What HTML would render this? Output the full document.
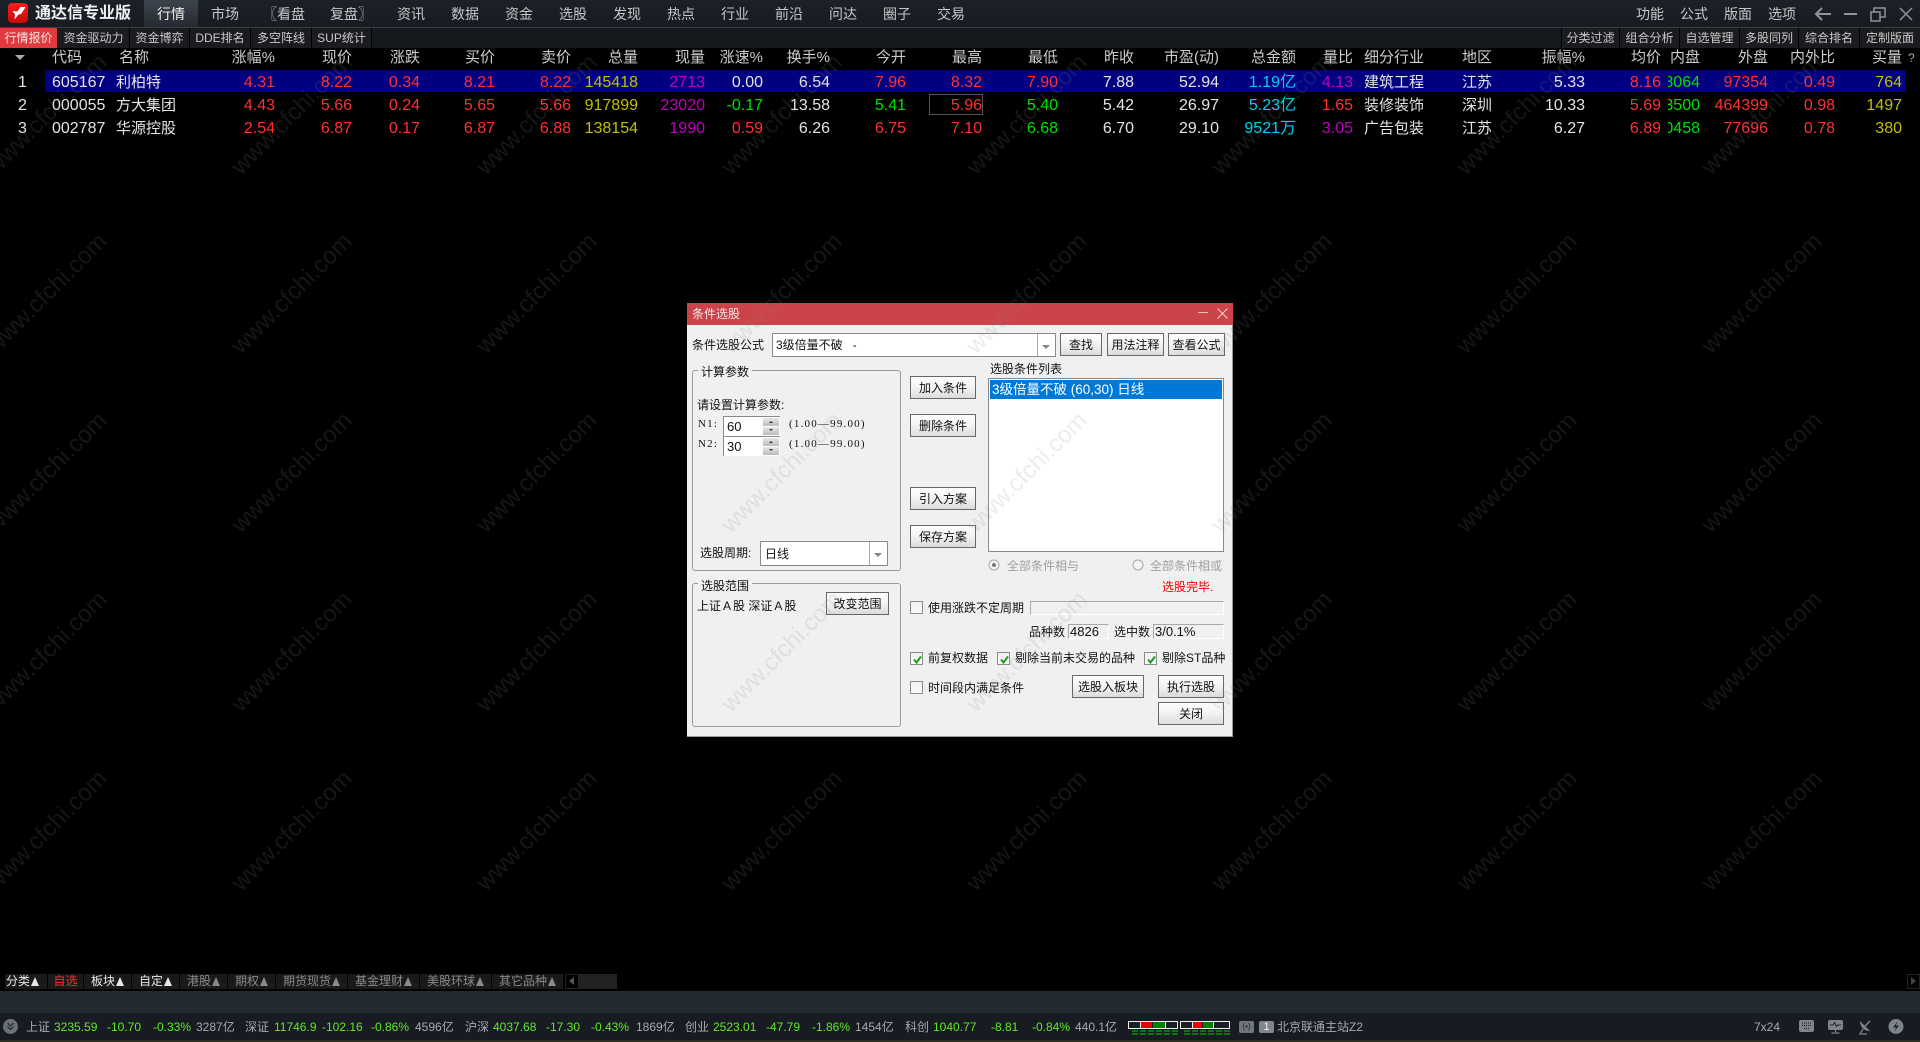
<!DOCTYPE html>
<html lang="zh">
<head>
<meta charset="utf-8">
<title>通达信专业版</title>
<style>
html,body{margin:0;padding:0;background:#000;}
body{position:relative;width:1920px;height:1042px;overflow:hidden;font-family:"Liberation Sans","Noto Sans CJK SC",sans-serif;color:#ddd;}
.a{position:absolute;}
.t{position:absolute;white-space:nowrap;line-height:16px;font-size:12px;}
#top{left:0;top:0;width:1920px;height:27px;background:linear-gradient(#1c2027,#181b22);}
#line{left:0;top:27px;width:1920px;height:1px;background:#3a3f46;}
#sub{left:0;top:28px;width:1920px;height:20px;background:#15181d;}
.m{position:absolute;top:5px;font-size:14px;line-height:18px;color:#c4c6c8;white-space:nowrap;}
.st{position:absolute;top:28px;height:20px;line-height:20px;font-size:12px;color:#c8c8c8;text-align:center;background:#1b1c1f;border-right:1px solid #000;box-sizing:border-box;white-space:nowrap;}
table{position:absolute;left:0;top:48px;border-collapse:collapse;table-layout:fixed;width:1920px;font-size:16px;}
td,th{padding:0;text-align:right;font-weight:normal;white-space:nowrap;overflow:hidden;height:23px;line-height:23px;color:#e4e4e4;}
th{font-size:15px;height:23px;line-height:20px;color:#ccc;vertical-align:top;}
.l{text-align:left;font-size:15px;}
.c{text-align:center;}
.r{color:#ff3030;}.g{color:#00e000;}.y{color:#c0c000;}.p{color:#c000c0;}.b{color:#00d0f0;}
.cl{display:flex;justify-content:flex-end;overflow:hidden;width:32px;margin-left:7px;}
#dlg{left:687px;top:303px;width:546px;height:434px;background:#f0f0f0;border-right:1px solid #999;border-bottom:1px solid #999;box-sizing:border-box;}
#tt{left:687px;top:303px;width:546px;height:22px;background:#cb444a;}
.btn{position:absolute;box-sizing:border-box;border:1px solid #686868;background:linear-gradient(#fdfdfd,#f4f4f4 45%,#dcdcdc);color:#111;font-size:12px;display:flex;align-items:center;justify-content:center;white-space:nowrap;}
.grp{position:absolute;box-sizing:border-box;border:1px solid #9a9a9a;border-radius:3px;}
.k{color:#111;}
.lab{background:#f0f0f0;padding:0 3px;}
.box{position:absolute;box-sizing:border-box;border:1px solid #8a8a8a;background:#fff;}
.ar{position:absolute;width:0;height:0;border-left:4px solid transparent;border-right:4px solid transparent;border-top:4px solid #888;}
.cb{position:absolute;box-sizing:border-box;width:13px;height:13px;border:1px solid #8c8c8c;background:linear-gradient(#f0f0f0,#fafafa);}
.cb svg{position:absolute;left:1px;top:1px;}
.ser{font-family:"Liberation Serif","Noto Serif CJK SC",serif;font-size:11px;letter-spacing:1.2px;}
.spn{position:absolute;width:16px;height:8px;background:linear-gradient(#e8e8e8,#bbb);box-sizing:border-box;}
.sunk{position:absolute;box-sizing:border-box;border:1px solid #fff;border-top-color:#a8a8a8;border-left-color:#a8a8a8;background:#f0f0f0;}
.bt{position:absolute;top:974px;height:15px;line-height:15px;font-size:12px;background:#1a1a1a;text-align:center;color:#8a8a8a;white-space:nowrap;}
.bt.w{color:#e8e8e8;}
.tr{display:inline-block;margin-left:1px;width:0;height:0;border-left:4px solid transparent;border-right:4px solid transparent;border-bottom:9px solid currentColor;vertical-align:-1px;}
.s{position:absolute;top:1019px;line-height:16px;font-size:12px;color:#a4abb2;white-space:nowrap;}
.n{color:#5ceb26;}
</style>
</head>
<body>
<!-- top menu -->
<div class="a" id="top"></div>
<div class="a" id="line"></div>
<div class="a" id="sub"></div>
<div class="a" style="left:144px;top:0;width:54px;height:27px;background:linear-gradient(#3c444d,#252a31);"></div>
<div class="a" style="left:8px;top:3px;width:20px;height:20px;border-radius:4px;background:linear-gradient(#f02020,#c80808);"></div>
<svg class="a" style="left:8px;top:3px" width="20" height="20" viewBox="0 0 20 20"><path d="M4.500 8 L9.500 8.500 L12.500 4 L17.500 4 L13.500 10.500 L10 12 L6.500 16.500 L7 11.500 Z" fill="#fff"/></svg>
<div class="t" style="left:35px;top:4px;font-size:16px;line-height:20px;font-weight:bold;color:#eef0f2;">通达信专业版</div>
<div class="m" style="left:157px;color:#eee;">行情</div>
<div class="m" style="left:211px;">市场</div>
<div class="m" style="left:263px;">〖看盘</div>
<div class="m" style="left:330px;">复盘〗</div>
<div class="m" style="left:397px;">资讯</div>
<div class="m" style="left:451px;">数据</div>
<div class="m" style="left:505px;">资金</div>
<div class="m" style="left:559px;">选股</div>
<div class="m" style="left:613px;">发现</div>
<div class="m" style="left:667px;">热点</div>
<div class="m" style="left:721px;">行业</div>
<div class="m" style="left:775px;">前沿</div>
<div class="m" style="left:829px;">问达</div>
<div class="m" style="left:883px;">圈子</div>
<div class="m" style="left:937px;">交易</div>
<div class="m" style="left:1636px;">功能</div>
<div class="m" style="left:1680px;">公式</div>
<div class="m" style="left:1724px;">版面</div>
<div class="m" style="left:1768px;">选项</div>
<svg class="a" style="left:1810px;top:4px" width="110" height="20" viewBox="0 0 110 20" fill="none" stroke="#8f959b" stroke-width="1.5">
<path d="M21 10 H6 M12 4 L6 10 L12 16" stroke-width="2"/>
<path d="M34 10 H47" stroke-width="2"/>
<rect x="61" y="8" width="9" height="9"/><path d="M64 8 V4 H75 V13 H70"/>
<path d="M90 4 L102 16 M102 4 L90 16"/>
</svg>
<!-- sub tabs -->
<div class="st" style="left:0;width:58px;background:#e03a3e;color:#f4e8e8;">行情报价</div>
<div class="st" style="left:58px;width:72px;">资金驱动力</div>
<div class="st" style="left:130px;width:60px;">资金博弈</div>
<div class="st" style="left:190px;width:61px;">DDE排名</div>
<div class="st" style="left:251px;width:61px;">多空阵线</div>
<div class="st" style="left:312px;width:60px;">SUP统计</div>
<div class="st" style="left:1561px;width:59px;border-left:1px solid #000;">分类过滤</div>
<div class="st" style="left:1620px;width:60px;">组合分析</div>
<div class="st" style="left:1680px;width:60px;">自选管理</div>
<div class="st" style="left:1740px;width:59px;">多股同列</div>
<div class="st" style="left:1799px;width:61px;">综合排名</div>
<div class="st" style="left:1860px;width:60px;border-right:0;">定制版面</div>
<!-- highlight row -->
<div class="a" style="left:45px;top:70px;width:1861px;height:22px;background:#000080;"></div>
<div class="a" style="left:929px;top:94px;width:54px;height:21px;box-sizing:border-box;border:1px solid #555;"></div>
<div class="a" style="left:15px;top:55px;width:0;height:0;border-left:5px solid transparent;border-right:5px solid transparent;border-top:5px solid #aaa;"></div>
<!-- table -->
<table>
<colgroup>
<col style="width:45px"><col style="width:71px"><col style="width:84px"><col style="width:75px"><col style="width:77px"><col style="width:68px"><col style="width:75px"><col style="width:76px"><col style="width:67px"><col style="width:67px"><col style="width:58px"><col style="width:67px"><col style="width:76px"><col style="width:76px"><col style="width:76px"><col style="width:76px"><col style="width:85px"><col style="width:77px"><col style="width:57px"><col style="width:109px"><col style="width:68px"><col style="width:55px"><col style="width:76px"><col style="width:39px"><col style="width:68px"><col style="width:67px"><col style="width:67px"><col style="width:18px">
</colgroup>
<tr>
<th class="c"></th><th class="l" style="padding-left:7px">代码</th><th class="l" style="padding-left:3px">名称<span style="margin-left:51px;font-size:8px">●</span></th><th>涨幅%</th><th>现价</th><th>涨跌</th><th>买价</th><th>卖价</th><th>总量</th><th>现量</th><th>涨速%</th><th>换手%</th><th>今开</th><th>最高</th><th>最低</th><th>昨收</th><th>市盈(动)</th><th>总金额</th><th>量比</th><th class="l" style="padding-left:11px">细分行业</th><th class="l">地区</th><th>振幅%</th><th>均价</th><th>内盘</th><th>外盘</th><th>内外比</th><th>买量</th><th style="font-size:12px;color:#aaa;text-align:left;padding-left:6px;">?</th>
</tr>
<tr>
<td class="c">1</td><td class="l" style="padding-left:7px;font-size:16px">605167</td><td class="l">利柏特</td><td class="r">4.31</td><td class="r">8.22</td><td class="r">0.34</td><td class="r">8.21</td><td class="r">8.22</td><td class="y">145418</td><td class="p">2713</td><td>0.00</td><td>6.54</td><td class="r">7.96</td><td class="r">8.32</td><td class="r">7.90</td><td>7.88</td><td>52.94</td><td class="b">1.19亿</td><td class="p">4.13</td><td class="l" style="padding-left:11px">建筑工程</td><td class="l">江苏</td><td>5.33</td><td class="r">8.16</td><td class="g"><div class="cl">48064</div></td><td class="r">97354</td><td class="r">0.49</td><td class="y">764</td><td></td>
</tr>
<tr>
<td class="c">2</td><td class="l" style="padding-left:7px;font-size:16px">000055</td><td class="l">方大集团</td><td class="r">4.43</td><td class="r">5.66</td><td class="r">0.24</td><td class="r">5.65</td><td class="r">5.66</td><td class="y">917899</td><td class="p">23020</td><td class="g">-0.17</td><td>13.58</td><td class="g">5.41</td><td class="r">5.96</td><td class="g">5.40</td><td>5.42</td><td>26.97</td><td class="b">5.23亿</td><td class="r">1.65</td><td class="l" style="padding-left:11px">装修装饰</td><td class="l">深圳</td><td>10.33</td><td class="r">5.69</td><td class="g"><div class="cl">453500</div></td><td class="r">464399</td><td class="r">0.98</td><td class="y">1497</td><td></td>
</tr>
<tr>
<td class="c">3</td><td class="l" style="padding-left:7px;font-size:16px">002787</td><td class="l">华源控股</td><td class="r">2.54</td><td class="r">6.87</td><td class="r">0.17</td><td class="r">6.87</td><td class="r">6.88</td><td class="y">138154</td><td class="p">1990</td><td class="r">0.59</td><td>6.26</td><td class="r">6.75</td><td class="r">7.10</td><td class="g">6.68</td><td>6.70</td><td>29.10</td><td class="b">9521万</td><td class="p">3.05</td><td class="l" style="padding-left:11px">广告包装</td><td class="l">江苏</td><td>6.27</td><td class="r">6.89</td><td class="g"><div class="cl">60458</div></td><td class="r">77696</td><td class="r">0.78</td><td class="y">380</td><td></td>
</tr>
</table>

<!-- dialog -->
<div class="a" id="dlg"></div>
<div class="a" id="tt"></div>
<div class="t" style="left:692px;top:306px;color:#f6e6e6;">条件选股</div>
<div class="a" style="left:1198px;top:312px;width:10px;height:1px;background:#eeb;opacity:.8"></div>
<svg class="a" style="left:1217px;top:308px" width="11" height="11" fill="none" stroke="#f0d0d0"><path d="M.5 .5 L10.500 10.500 M10.500 .5 L.5 10.500"/></svg>

<div class="t k" style="left:692px;top:337px;">条件选股公式</div>
<div class="box" style="left:772px;top:333px;width:284px;height:24px;"></div>
<div class="a" style="left:1037px;top:334px;width:1px;height:22px;background:#aaa;"></div>
<div class="ar" style="left:1042px;top:345px;"></div>
<div class="t k" style="left:776px;top:337px;">3级倍量不破 &nbsp;&nbsp;-</div>
<div class="btn" style="left:1060px;top:333px;width:42px;height:23px;">查找</div>
<div class="btn" style="left:1107px;top:333px;width:57px;height:23px;">用法注释</div>
<div class="btn" style="left:1168px;top:333px;width:57px;height:23px;">查看公式</div>

<div class="grp" style="left:692px;top:370px;width:209px;height:201px;"></div>
<div class="t k lab" style="left:698px;top:364px;">计算参数</div>
<div class="t k" style="left:697px;top:397px;">请设置计算参数:</div>
<div class="t k ser" style="left:698px;top:416px;">N1:</div>
<div class="t k ser" style="left:698px;top:436px;">N2:</div>
<div class="a" style="left:723px;top:416px;width:57px;height:20px;background:#fff;border-top:1px solid #8a8a8a;border-left:1px solid #8a8a8a;box-sizing:border-box;"></div>
<div class="a" style="left:723px;top:436px;width:57px;height:20px;background:#fff;border-top:1px solid #8a8a8a;border-left:1px solid #8a8a8a;box-sizing:border-box;"></div>
<div class="spn" style="left:763px;top:418px;"></div><div class="spn" style="left:763px;top:427px;"></div>
<div class="spn" style="left:763px;top:438px;"></div><div class="spn" style="left:763px;top:447px;"></div>
<svg class="a" style="left:763px;top:418px" width="16" height="38" fill="#333"><path d="M6 5 h4 l-2 -2z M6 11 h4 l-2 2z M6 25 h4 l-2 -2z M6 31 h4 l-2 2z"/></svg>
<div class="t k" style="left:727px;top:419px;font-size:13px;">60</div>
<div class="t k" style="left:727px;top:439px;font-size:13px;">30</div>
<div class="t k ser" style="left:789px;top:416px;">(1.00—99.00)</div>
<div class="t k ser" style="left:789px;top:436px;">(1.00—99.00)</div>
<div class="t k" style="left:700px;top:545px;">选股周期:</div>
<div class="box" style="left:760px;top:541px;width:128px;height:25px;"></div>
<div class="a" style="left:869px;top:542px;width:1px;height:23px;background:#aaa;"></div>
<div class="ar" style="left:874px;top:553px;"></div>
<div class="t k" style="left:765px;top:546px;">日线</div>

<div class="grp" style="left:692px;top:583px;width:209px;height:144px;"></div>
<div class="t k lab" style="left:698px;top:578px;">选股范围</div>
<div class="t k" style="left:697px;top:598px;">上证<span style="margin:0 2px">A</span>股 深证<span style="margin:0 2px">A</span>股</div>
<div class="btn" style="left:826px;top:592px;width:63px;height:23px;">改变范围</div>

<div class="btn" style="left:910px;top:376px;width:66px;height:23px;">加入条件</div>
<div class="btn" style="left:910px;top:414px;width:66px;height:23px;">删除条件</div>
<div class="btn" style="left:910px;top:487px;width:66px;height:23px;">引入方案</div>
<div class="btn" style="left:910px;top:525px;width:66px;height:23px;">保存方案</div>

<div class="t k" style="left:990px;top:361px;">选股条件列表</div>
<div class="box" style="left:988px;top:378px;width:236px;height:174px;"></div>
<div class="a" style="left:990px;top:380px;width:232px;height:19px;background:#0078d7;"></div>
<div class="t" style="left:992px;top:382px;font-size:13.5px;color:#fff;">3级倍量不破 (60,30) 日线</div>

<svg class="a" style="left:988px;top:559px" width="12" height="12"><circle cx="6" cy="6" r="5" fill="#f4f4f4" stroke="#a8a8a8"/><circle cx="6" cy="6" r="2" fill="#777"/></svg>
<div class="t" style="left:1007px;top:558px;color:#a0a0a0;">全部条件相与</div>
<svg class="a" style="left:1132px;top:559px" width="12" height="12"><circle cx="6" cy="6" r="5" fill="#f4f4f4" stroke="#a8a8a8"/></svg>
<div class="t" style="left:1150px;top:558px;color:#a0a0a0;">全部条件相或</div>
<div class="t" style="left:1162px;top:579px;color:#f00000;">选股完毕.</div>

<div class="cb" style="left:910px;top:601px;"></div>
<div class="t k" style="left:928px;top:600px;">使用涨跌不定周期</div>
<div class="sunk" style="left:1030px;top:601px;width:194px;height:14px;"></div>
<div class="t k" style="left:1029px;top:624px;">品种数</div>
<div class="sunk" style="left:1068px;top:624px;width:41px;height:15px;"></div>
<div class="t k" style="left:1070px;top:624px;font-size:13px;">4826</div>
<div class="t k" style="left:1114px;top:624px;">选中数</div>
<div class="sunk" style="left:1153px;top:624px;width:71px;height:15px;"></div>
<div class="t k" style="left:1155px;top:624px;font-size:13px;">3/0.1%</div>

<div class="cb" style="left:910px;top:652px;"><svg width="11" height="11" fill="none" stroke="#1aa01a" stroke-width="2"><path d="M2 5.500 L4.500 8.500 L9 2.500"/></svg></div>
<div class="t k" style="left:928px;top:650px;">前复权数据</div>
<div class="cb" style="left:997px;top:652px;"><svg width="11" height="11" fill="none" stroke="#1aa01a" stroke-width="2"><path d="M2 5.500 L4.500 8.500 L9 2.500"/></svg></div>
<div class="t k" style="left:1015px;top:650px;">剔除当前未交易的品种</div>
<div class="cb" style="left:1144px;top:652px;"><svg width="11" height="11" fill="none" stroke="#1aa01a" stroke-width="2"><path d="M2 5.500 L4.500 8.500 L9 2.500"/></svg></div>
<div class="t k" style="left:1162px;top:650px;">剔除ST品种</div>
<div class="cb" style="left:910px;top:681px;"></div>
<div class="t k" style="left:928px;top:680px;">时间段内满足条件</div>
<div class="btn" style="left:1072px;top:675px;width:72px;height:23px;">选股入板块</div>
<div class="btn" style="left:1158px;top:675px;width:66px;height:23px;">执行选股</div>
<div class="btn" style="left:1158px;top:702px;width:66px;height:23px;">关闭</div>

<!-- bottom tabs -->
<div class="bt w" style="left:5px;width:41px;padding-left:1px;text-align:left;">分类<i class="tr"></i></div>
<div class="bt" style="left:48px;width:35px;color:#f03030;">自选</div>
<div class="bt w" style="left:84px;width:47px;">板块<i class="tr"></i></div>
<div class="bt w" style="left:132px;width:47px;">自定<i class="tr"></i></div>
<div class="bt" style="left:180px;width:47px;">港股<i class="tr"></i></div>
<div class="bt" style="left:228px;width:47px;">期权<i class="tr"></i></div>
<div class="bt" style="left:276px;width:71px;">期货现货<i class="tr"></i></div>
<div class="bt" style="left:348px;width:71px;">基金理财<i class="tr"></i></div>
<div class="bt" style="left:420px;width:71px;">美股环球<i class="tr"></i></div>
<div class="bt" style="left:492px;width:71px;">其它品种<i class="tr"></i></div>
<div class="a" style="left:565px;top:974px;width:14px;height:15px;box-sizing:border-box;border:1px solid #222;"></div>
<div class="a" style="left:569px;top:977px;width:0;height:0;border-top:4px solid transparent;border-bottom:4px solid transparent;border-right:5px solid #555;"></div>
<div class="a" style="left:579px;top:974px;width:38px;height:15px;background:#222;"></div>
<div class="a" style="left:1907px;top:974px;width:13px;height:15px;box-sizing:border-box;border:1px solid #222;"></div>
<div class="a" style="left:1911px;top:977px;width:0;height:0;border-top:4px solid transparent;border-bottom:4px solid transparent;border-left:5px solid #444;"></div>

<!-- status -->
<div class="a" style="left:0;top:991px;width:1920px;height:22px;background:#242a31;"></div>
<div class="a" style="left:0;top:1013px;width:1920px;height:27px;background:#181c22;"></div>
<div class="a" style="left:0;top:1040px;width:1920px;height:2px;background:#2b3020;"></div>
<svg class="a" style="left:3px;top:1019px" width="15" height="15"><circle cx="7.500" cy="7.500" r="7.500" fill="#6a7179"/><path d="M4.500 4 L7.500 7 L10.500 4 M4.500 7.500 L7.500 10.500 L10.500 7.500" fill="none" stroke="#20252b" stroke-width="1.200"/></svg>
<div class="s" style="left:26px">上证</div><div class="s n" style="left:54px">3235.59</div><div class="s n" style="left:107px">-10.70</div><div class="s n" style="left:153px">-0.33%</div><div class="s" style="left:196px">3287亿</div>
<div class="s" style="left:245px">深证</div><div class="s n" style="left:274px">11746.9</div><div class="s n" style="left:322px">-102.16</div><div class="s n" style="left:371px">-0.86%</div><div class="s" style="left:415px">4596亿</div>
<div class="s" style="left:465px">沪深</div><div class="s n" style="left:493px">4037.68</div><div class="s n" style="left:546px">-17.30</div><div class="s n" style="left:591px">-0.43%</div><div class="s" style="left:636px">1869亿</div>
<div class="s" style="left:685px">创业</div><div class="s n" style="left:713px">2523.01</div><div class="s n" style="left:766px">-47.79</div><div class="s n" style="left:812px">-1.86%</div><div class="s" style="left:855px">1454亿</div>
<div class="s" style="left:905px">科创</div><div class="s n" style="left:933px">1040.77</div><div class="s n" style="left:991px">-8.81</div><div class="s n" style="left:1032px">-0.84%</div><div class="s" style="left:1075px">440.1亿</div>
<svg class="a" style="left:1128px;top:1020px" width="104" height="16">
<g fill="#1c2026" stroke="#eee"><rect x=".5" y="1.500" width="49" height="7"/><rect x="52.500" y="1.500" width="49" height="7"/></g>
<rect x="13" y="2" width="11" height="6" fill="#f00000"/><rect x="25" y="2" width="12" height="6" fill="#008000"/><rect x="12" y="2" width="1" height="6" fill="#eee"/><rect x="37" y="2" width="1" height="6" fill="#eee"/>
<rect x="65" y="2" width="9" height="6" fill="#f00000"/><rect x="75" y="2" width="10" height="6" fill="#008000"/><rect x="64" y="2" width="1" height="6" fill="#eee"/><rect x="85" y="2" width="1" height="6" fill="#eee"/>
<g fill="#007a00"><rect x="4" y="10" width="6" height="2"/><rect x="12" y="10" width="6" height="2"/><rect x="20" y="10" width="6" height="2"/><rect x="28" y="10" width="6" height="2"/><rect x="36" y="10" width="6" height="2"/><rect x="44" y="10" width="6" height="2"/><rect x="56" y="10" width="6" height="2"/><rect x="64" y="10" width="6" height="2"/><rect x="72" y="10" width="6" height="2"/><rect x="80" y="10" width="6" height="2"/><rect x="88" y="10" width="6" height="2"/><rect x="96" y="10" width="6" height="2"/>
<rect x="4" y="13" width="6" height="2"/><rect x="12" y="13" width="6" height="2"/><rect x="20" y="13" width="6" height="2"/><rect x="28" y="13" width="6" height="2"/><rect x="36" y="13" width="6" height="2"/><rect x="44" y="13" width="6" height="2"/><rect x="56" y="13" width="6" height="2"/><rect x="64" y="13" width="6" height="2"/><rect x="72" y="13" width="6" height="2"/><rect x="80" y="13" width="6" height="2"/><rect x="88" y="13" width="6" height="2"/><rect x="96" y="13" width="6" height="2"/></g>
</svg>
<div class="a" style="left:1239px;top:1021px;width:15px;height:12px;border-radius:2px;background:#70767d;color:#20252b;font-size:8px;line-height:12px;text-align:center;">(•)</div>
<div class="a" style="left:1259px;top:1021px;width:15px;height:12px;border-radius:2px;background:#80868d;color:#eee;font-size:11px;line-height:12px;text-align:center;">1</div>
<div class="s" style="left:1277px">北京联通主站Z2</div>
<div class="s" style="left:1754px;color:#a4abb2;">7x24</div>
<svg class="a" style="left:1799px;top:1019px" width="105" height="16">
<rect x="0" y="1" width="15" height="12" rx="2" fill="#7d848b"/>
<path d="M3 4 h9 M3 6.500 h9 M5 9.500 h5" stroke="#20252b" stroke-width="1.200" stroke-dasharray="1 1" fill="none"/>
<rect x="29" y="1" width="15" height="10" rx="2" fill="#7d848b"/>
<path d="M31 6 h3 l1.500 -2.500 l2 4 l1.500 -1.500 h3" stroke="#20252b" stroke-width="1" fill="none"/>
<path d="M36.500 11 v2 M32.500 14 h8" stroke="#7d848b" stroke-width="1.300"/>
<path d="M61 2 C61 8 65 12 71 12 Z" fill="#7d848b"/><path d="M66 7 L71 2" stroke="#7d848b" stroke-width="1.500"/><path d="M64 10 L61 15 H68" fill="none" stroke="#7d848b" stroke-width="1.300"/>
<circle cx="97" cy="7.500" r="7.500" fill="#7d848b"/>
<path d="M98.500 2.500 L94 8.500 H97 L95.500 12.500 L100 6.500 H97 Z" fill="#20252b"/>
</svg>

<!-- watermark -->
<svg class="a" style="left:0;top:0;pointer-events:none;" width="1920" height="1042" font-family="Liberation Sans, sans-serif" font-size="24" fill="rgba(135,135,135,.16)">
<text transform="translate(-4 176) rotate(-45)">www.cfchi.com</text><text transform="translate(241 176) rotate(-45)">www.cfchi.com</text><text transform="translate(486 176) rotate(-45)">www.cfchi.com</text><text transform="translate(731 176) rotate(-45)">www.cfchi.com</text><text transform="translate(976 176) rotate(-45)">www.cfchi.com</text><text transform="translate(1221 176) rotate(-45)">www.cfchi.com</text><text transform="translate(1466 176) rotate(-45)">www.cfchi.com</text><text transform="translate(1711 176) rotate(-45)">www.cfchi.com</text>
<text transform="translate(-4 355) rotate(-45)">www.cfchi.com</text><text transform="translate(241 355) rotate(-45)">www.cfchi.com</text><text transform="translate(486 355) rotate(-45)">www.cfchi.com</text><text transform="translate(731 355) rotate(-45)">www.cfchi.com</text><text transform="translate(976 355) rotate(-45)">www.cfchi.com</text><text transform="translate(1221 355) rotate(-45)">www.cfchi.com</text><text transform="translate(1466 355) rotate(-45)">www.cfchi.com</text><text transform="translate(1711 355) rotate(-45)">www.cfchi.com</text>
<text transform="translate(-4 534) rotate(-45)">www.cfchi.com</text><text transform="translate(241 534) rotate(-45)">www.cfchi.com</text><text transform="translate(486 534) rotate(-45)">www.cfchi.com</text><text transform="translate(731 534) rotate(-45)">www.cfchi.com</text><text transform="translate(976 534) rotate(-45)">www.cfchi.com</text><text transform="translate(1221 534) rotate(-45)">www.cfchi.com</text><text transform="translate(1466 534) rotate(-45)">www.cfchi.com</text><text transform="translate(1711 534) rotate(-45)">www.cfchi.com</text>
<text transform="translate(-4 713) rotate(-45)">www.cfchi.com</text><text transform="translate(241 713) rotate(-45)">www.cfchi.com</text><text transform="translate(486 713) rotate(-45)">www.cfchi.com</text><text transform="translate(731 713) rotate(-45)">www.cfchi.com</text><text transform="translate(976 713) rotate(-45)">www.cfchi.com</text><text transform="translate(1221 713) rotate(-45)">www.cfchi.com</text><text transform="translate(1466 713) rotate(-45)">www.cfchi.com</text><text transform="translate(1711 713) rotate(-45)">www.cfchi.com</text>
<text transform="translate(-4 892) rotate(-45)">www.cfchi.com</text><text transform="translate(241 892) rotate(-45)">www.cfchi.com</text><text transform="translate(486 892) rotate(-45)">www.cfchi.com</text><text transform="translate(731 892) rotate(-45)">www.cfchi.com</text><text transform="translate(976 892) rotate(-45)">www.cfchi.com</text><text transform="translate(1221 892) rotate(-45)">www.cfchi.com</text><text transform="translate(1466 892) rotate(-45)">www.cfchi.com</text><text transform="translate(1711 892) rotate(-45)">www.cfchi.com</text>
</svg>
</body>
</html>
